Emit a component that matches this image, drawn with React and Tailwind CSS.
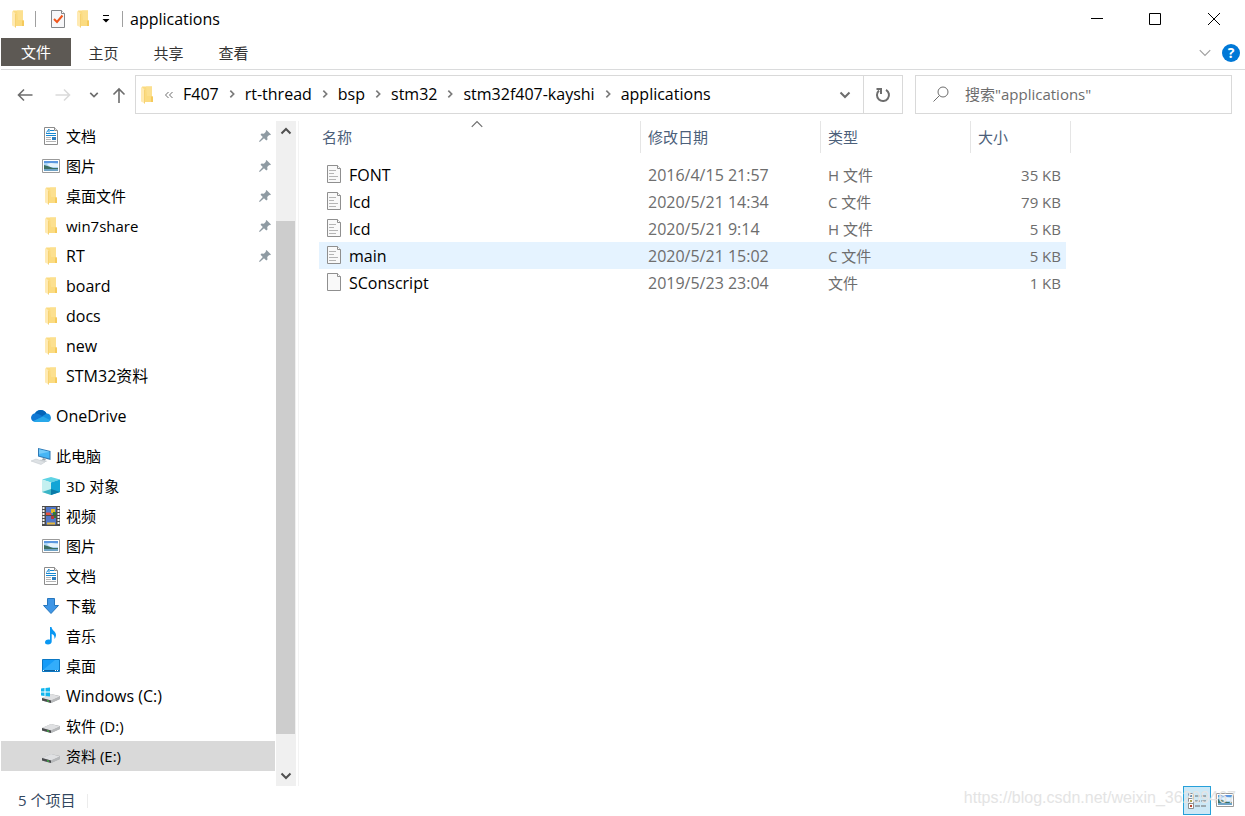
import React from 'react';

const FolderIcon = () => (
    <svg className="block h-4.5 w-3.5 shrink-0" viewBox="0 0 14 18">
        <path d="M2 .5h10V10l1 1v5H4z" fill="#fbdb80" />
        <path d="M6 .5h6V10H7z" fill="#fce08f" />
        <path d="M11 11l1-1 1 1v5h-2z" fill="#f5ca5c" />
        <path d="M1 1l4 2.500v14L1 15.500z" fill="#ffeab2" />
        <path d="M4.500 3.500v14" stroke="#f6d273" strokeWidth="1" />
    </svg>
);

const DocumentIcon = () => (
    <svg className="block h-4.5 w-4.5 shrink-0" viewBox="0 0 18 18">
        <path d="M2.500 .5h10l3 3v14h-13z" fill="#fff" stroke="#8c8c8c" />
        <path d="M12.500 .5v3h3" fill="#e8e8e8" stroke="#8c8c8c" />
        <path d="M4.500 5.500l2.500-3.500v3.500M8 3.500h4M4 6.500h10M4 8.500h10" stroke="#1787d0" fill="none" />
        <path d="M4 10.500h5M4 12.500h5M4 14.500h10" stroke="#b4b4b4" />
        <path d="M10 10h4v3h-4z" fill="#2f7fc0" />
    </svg>
);

const PictureIcon = () => (
    <svg className="block h-4.5 w-4.5 shrink-0" viewBox="0 0 18 18">
        <path d="M.5 2.500h17v13H.5z" fill="#fff" stroke="#9a9a9a" />
        <path d="M2 4h14v10H2z" fill="#a9d3f5" />
        <path d="M2 4h14v2H2z" fill="#5b97e0" />
        <path d="M5 7l4-1 7 1v3H8z" fill="#e6f3fc" />
        <path d="M2 8l5 1.500 4 1.500h5v1H2z" fill="#3d6f62" />
        <path d="M2 12h14v2H2z" fill="#6fa3c6" />
    </svg>
);

const OneDriveIcon = () => (
    <svg className="block h-3.5 w-5 shrink-0" viewBox="0 0 20 14">
        <path d="M4.500 13a4.300 4.300 0 0 1-.6-8.400A6.500 6.500 0 0 1 15.500 4.500 4.300 4.300 0 0 1 16.500 13z" fill="#1490df" />
        <path d="M3.900 4.600A6.500 6.500 0 0 1 15.500 4.500L10 8z" fill="#0364b8" />
        <path d="M3.900 4.600C6 4 8 5 12 7.500L2 12.300A4.200 4.200 0 0 1 3.900 4.600z" fill="#0f78d4" />
        <path d="M2 12.300L12 7.500l7.500 3.800A4 4 0 0 1 16.500 13h-12z" fill="#28a8ea" />
    </svg>
);

const ComputerIcon = () => (
    <svg className="block h-4.5 w-5 shrink-0" viewBox="0 0 20 18">
        <path d="M7 1l12.500 3v9L7 9.500z" fill="#3079b5" />
        <path d="M8 2.200l10.500 2.600v6.700L8 8.700z" fill="#46b5f5" />
        <path d="M8 2.200l10.500 2.600L8 7z" fill="#75cbfa" />
        <path d="M12 11l3 .8-1 2-3-.8z" fill="#9ba4ab" />
        <path d="M9.500 12.500l7 1.500-2 1-6-1.500z" fill="#c9ced2" />
        <path d="M0 14l5-2 9 3-4 2.500z" fill="#dde1e4" stroke="#bfc5ca" strokeWidth=".5" />
    </svg>
);

const CubeIcon = () => (
    <svg className="block h-4.5 w-4.5 shrink-0" viewBox="0 0 18 18">
        <path d="M9 0l9 2.500L9 5.500 0 2.500z" fill="#5fd3e4" />
        <path d="M0 2.500l9 3V18l-9-3z" fill="#c4f0f0" />
        <path d="M18 2.500l-9 3V18l9-3z" fill="#12a5d6" />
        <path d="M9 12l9 3-9 3z" fill="#0b7ba8" />
        <path d="M9 12l-9 3 9 3z" fill="#3cb5c6" />
    </svg>
);

const VideoIcon = () => (
    <svg className="block h-5 w-4.5 shrink-0" viewBox="0 0 18 20">
        <path d="M0 0h18v20H0z" fill="#4b4b4b" />
        <path d="M1.500 1v18M16.500 1v18" stroke="#f5f5f5" strokeWidth="2" strokeDasharray="2 1" />
        <path d="M4 1h10v8H4zM4 10h10v8.500H4z" fill="#5278c9" />
        <path d="M4 6.500h4l2 2.500H4z" fill="#e8503a" />
        <path d="M9 3h4v4H9z" fill="#e6b826" />
        <path d="M11 6h3v3h-3zM11 10h3v2h-3z" fill="#347a35" />
        <path d="M9 10h3v3H9z" fill="#b8373a" />
        <path d="M5 16.500h8v2H5z" fill="#e7b93e" />
    </svg>
);

const DownloadIcon = () => (
    <svg className="block h-4.5 w-4.5 shrink-0" viewBox="0 0 18 18">
        <path d="M5.500 1.500h7v7h4L9 16.500 1.500 8.500h4z" fill="#3f96e6" stroke="#2676bd" />
    </svg>
);

const MusicIcon = () => (
    <svg className="block h-4.5 w-4.5 shrink-0" viewBox="0 0 18 18">
        <path d="M8 0h1.500c.5 3.500 4.500 4.500 4.500 8 0 1.500-.8 3-1.500 4 .2-3-.8-4.500-2.800-5V14.500c0 1.800-1.700 3-3.700 3S3 16.500 3 15.200c0-1.500 1.500-2.700 3.300-2.700.7 0 1.300.1 1.700.3z" fill="#0a97f2" />
    </svg>
);

const DesktopIcon = () => (
    <svg className="block h-4.5 w-4.5 shrink-0" viewBox="0 0 18 18">
        <path d="M.5 2.500h17v12H.5z" fill="#169cf8" stroke="#0b78c4" />
        <path d="M1 13L13 3h4v10z" fill="#33adfb" />
        <path d="M1 13.500h16" stroke="#0d609d" />
        <path d="M1 13.500h1M13 13.500h1M15 13.500h1" stroke="#fff" />
    </svg>
);

const DriveIcon = ({ system }) => (
    <svg className="block h-4.5 w-5 shrink-0" viewBox="0 0 20 18">
        <path d="M1 11l9-4 9 2v3l-9 4-9-2.500z" fill="#a9abad" />
        <path d="M1 11l9-4 9 2.500-9 4z" fill="#dfe0e2" />
        <path d="M1 11l9 2.500V16l-9-2.500z" fill="#4a4c4e" />
        <path d="M10 13.500l9-4V12l-9 4z" fill="#b7b9bb" />
        <path d="M6 13.300l2 .5v1l-2-.5z" fill="#38d13f" />
        {system && <path d="M0 1.500l3.500-.5v3.500H0zM4.500 1L9 .5v4H4.500zM0 5.500h3.500V9L0 8.500zM4.500 5.500H9v4L4.500 9z" fill="#12b6ee" />}
    </svg>
);

const FileIcon = ({ lines }) => (
    <svg className="block h-4.5 w-3.5 shrink-0" viewBox="0 0 14 18">
        <path d="M.5 .5h10l3 3v14H.5z" fill="#f9f9f9" stroke="#8f8f8f" />
        <path d="M10.500 .5v3h3" fill="#fff" stroke="#8f8f8f" />
        {lines && <path d="M2 5.500h7M2 8.500h5M2 11.500h9M2 14.500h7" stroke="#b5b5b5" />}
    </svg>
);

const PinIcon = () => (
    <svg className="block size-3" viewBox="0 0 12 12">
        <path d="M7.500 0L12 4.500l-1 .8-.8-.2-2 2 .3 2.400-1.200 1L5 8.200 .8 12 0 11.200 3.800 7 1.500 4.700l1-1.200 2.400.3 2-2L6.700 1z" fill="#8f9ba3" />
    </svg>
);

const Chevron = ({ className, d, width = 2 }) => (
    <svg className={className} viewBox="0 0 12 12" fill="none" stroke="currentColor" strokeWidth={width}>
        <path d={d} />
    </svg>
);

const DOWN = 'M1.500 3.500L6 8l4.500-4.500';
const UP = 'M1.500 8.500L6 4l4.500 4.500';
const RIGHT = 'M4 2l4 4-4 4';

const quickAccess = [
    { name: '文档', icon: DocumentIcon, pinned: true },
    { name: '图片', icon: PictureIcon, pinned: true },
    { name: '桌面文件', icon: FolderIcon, pinned: true },
    { name: 'win7share', icon: FolderIcon, pinned: true },
    { name: 'RT', icon: FolderIcon, pinned: true, latin: true },
    { name: 'board', icon: FolderIcon, latin: true },
    { name: 'docs', icon: FolderIcon, latin: true },
    { name: 'new', icon: FolderIcon, latin: true },
    { name: 'STM32资料', icon: FolderIcon, latin: true },
];

const computer = [
    { name: '3D 对象', icon: CubeIcon },
    { name: '视频', icon: VideoIcon },
    { name: '图片', icon: PictureIcon },
    { name: '文档', icon: DocumentIcon },
    { name: '下载', icon: DownloadIcon },
    { name: '音乐', icon: MusicIcon },
    { name: '桌面', icon: DesktopIcon },
    { name: 'Windows (C:)', icon: DriveIcon, system: true, latin: true },
    { name: '软件 (D:)', icon: DriveIcon },
    { name: '资料 (E:)', icon: DriveIcon, selected: true },
];

const files = [
    { name: 'FONT', date: '2016/4/15 21:57', type: 'H 文件', size: '35 KB', lines: true },
    { name: 'lcd', date: '2020/5/21 14:34', type: 'C 文件', size: '79 KB', lines: true },
    { name: 'lcd', date: '2020/5/21 9:14', type: 'H 文件', size: '5 KB', lines: true },
    { name: 'main', date: '2020/5/21 15:02', type: 'C 文件', size: '5 KB', lines: true, active: true },
    { name: 'SConscript', date: '2019/5/23 23:04', type: '文件', size: '1 KB' },
];

const crumbs = ['F407', 'rt-thread', 'bsp', 'stm32', 'stm32f407-kayshi', 'applications'];

const TreeItem = ({ name, icon: Icon, pinned, system, selected, latin }) => (
    <li>
        <a href="#" className={`flex h-7.5 items-center pl-10 pr-1 ${selected ? 'bg-[#d9d9d9]' : ''}`}>
            <span className="flex w-5 justify-center"><Icon system={system} /></span>
            <span className={`ml-1.25 flex-1 ${latin ? 'text-[16px]' : ''}`}>{name}</span>
            {pinned && <PinIcon />}
        </a>
    </li>
);

const TitleBar = () => (
    <header className="flex h-9.5 items-center pl-2.5">
        <FolderIcon />
        <span className="ml-2.5 h-4 w-px bg-[#a0a0a0]" />
        <button aria-label="属性" className="ml-3.5">
            <svg className="block h-4.5 w-4" viewBox="0 0 16 18">
                <path d="M1.500 .5h10l3 3v14h-13z" fill="#f7f7f9" stroke="#85878a" />
                <path d="M11.500 .5v3h3" fill="#fff" stroke="#85878a" />
                <path d="M4 9l3 3 5.500-6.500" fill="none" stroke="#f0561d" strokeWidth="2" />
            </svg>
        </button>
        <button aria-label="新建文件夹" className="ml-2.5"><FolderIcon /></button>
        <button aria-label="自定义快速访问工具栏" className="ml-3">
            <svg className="block h-2 w-2" viewBox="0 0 8 8">
                <path d="M1 0h6v1H1zM.5 4h7L4 7.500z" fill="#000" />
            </svg>
        </button>
        <span className="ml-3 mr-1.75 h-4 w-px bg-[#a0a0a0]" />
        <h1 className="flex-1 text-[16px] leading-5">applications</h1>
        <button aria-label="最小化" className="flex w-14.5 justify-center">
            <svg className="block size-3" viewBox="0 0 12 12"><path d="M0 5.500h12" stroke="#000" /></svg>
        </button>
        <button aria-label="最大化" className="flex w-14.5 justify-center">
            <svg className="block size-3" viewBox="0 0 12 12"><path d="M.5 .5h11v11H.5z" fill="none" stroke="#000" /></svg>
        </button>
        <button aria-label="关闭" className="flex w-15 justify-center">
            <svg className="block size-3" viewBox="0 0 12 12"><path d="M0 0l12 12M12 0L0 12" stroke="#000" /></svg>
        </button>
    </header>
);

const Ribbon = () => (
    <nav className="-mr-px flex h-8 items-start border-b border-[#dadbdc] pr-px text-[#333]">
        <button className="h-7 w-17.5 bg-[#5d5954] text-white">文件</button>
        <button className="h-7.5 w-16.25">主页</button>
        <button className="h-7.5 w-16.25">共享</button>
        <button className="h-7.5 w-16.25">查看</button>
        <span className="flex-1" />
        <button aria-label="展开功能区" className="mt-2 text-[#a0a0a0]">
            <Chevron className="block size-3.5" d={DOWN} width={1} />
        </button>
        <button aria-label="帮助" className="mx-1 mt-1.5 ml-2.5 size-4.5 rounded-full bg-[#0078d7] text-sm leading-4 font-bold text-white">?</button>
    </nav>
);

const AddressBar = () => (
    <div className="flex items-center pt-1.25 pr-3 text-[#6d6d6d]">
        <button aria-label="后退" className="ml-4">
            <svg className="block size-4" viewBox="0 0 16 16" fill="none" stroke="currentColor" strokeWidth="1.6"><path d="M15.500 8H1.500M7 2.500L1.500 8 7 13.500" /></svg>
        </button>
        <button aria-label="前进" className="ml-5.5 text-[#dadada]">
            <svg className="block size-4" viewBox="0 0 16 16" fill="none" stroke="currentColor" strokeWidth="1.6"><path d="M.5 8h14M9 2.500L14.500 8 9 13.500" /></svg>
        </button>
        <button aria-label="最近的位置" className="ml-4.5">
            <Chevron className="block size-2.5" d={DOWN} />
        </button>
        <button aria-label="向上" className="ml-3">
            <svg className="block size-4" viewBox="0 0 16 16" fill="none" stroke="currentColor" strokeWidth="1.6"><path d="M8 16V2M2.500 7.500L8 2l5.500 5.500" /></svg>
        </button>
        <div className="ml-2 flex h-9.75 flex-1 items-center border border-[#d9d9d9]">
            <span className="ml-1 mr-2.5"><FolderIcon /></span>
            <svg className="block size-2.5" viewBox="0 0 10 10" fill="none" stroke="currentColor"><path d="M4.500 2l-3 3 3 3M8.500 2l-3 3 3 3" /></svg>
            <ol className="ml-2.25 flex flex-1 items-center pb-0.5 text-[16px] leading-5 text-black">
                {crumbs.map((crumb, i) => (
                    <li key={crumb} className="flex items-center">
                        {i > 0 && <Chevron className="mx-2 size-2.5 text-[#7a7a7a]" d={RIGHT} />}
                        <a href="#">{crumb}</a>
                    </li>
                ))}
            </ol>
            <button aria-label="以前的位置" className="mr-3"><Chevron className="block size-3" d={DOWN} /></button>
            <button aria-label="刷新" className="flex h-full w-9.75 items-center justify-center border-l border-[#d9d9d9]">
                <svg className="block size-4" viewBox="0 0 16 16" fill="none" stroke="currentColor" strokeWidth="2">
                    <path d="M11 2.800A6 6 0 1 1 4 3.500M1.500 2h4.500v5" />
                </svg>
            </button>
        </div>
        <label className="ml-3 flex h-9.75 w-79.25 items-center border border-[#d9d9d9] pb-0.5 pl-4.25">
            <svg className="block size-4 shrink-0" viewBox="0 0 16 16" fill="none" stroke="currentColor"><circle cx="10" cy="6" r="5" /><path d="M6.500 9.500L.5 15.500" /></svg>
            <input type="text" aria-label="搜索" placeholder={'搜索"applications"'} className="ml-4 min-w-0 flex-1 outline-none placeholder:text-[#6d6d6d]" />
        </label>
    </div>
);

const Sidebar = () => (
    <aside className="flex w-74.5 shrink-0 border-r border-[#f3f3f3]">
        <div className="min-w-0 flex-1">
            <ul>
                {quickAccess.map((item) => <TreeItem key={item.name} {...item} />)}
            </ul>
            <a href="#" className="my-2.5 flex h-7.5 items-center gap-1.25 pl-7.5 text-[16px]"><OneDriveIcon />OneDrive</a>
            <a href="#" className="flex h-7.5 items-center gap-1.25 pl-7.5"><ComputerIcon />此电脑</a>
            <ul>
                {computer.map((item) => <TreeItem key={item.name} {...item} />)}
            </ul>
        </div>
        <div className="mr-0.5 ml-px flex w-5 flex-col items-center bg-[#f0f0f0] pr-px text-[#505050]">
            <button aria-label="向上滚动" className="flex h-5 w-full items-center justify-center"><Chevron className="size-3" d={UP} /></button>
            <div className="mt-20 w-full flex-1"><div className="h-full bg-[#cdcdcd]" /></div>
            <button aria-label="向下滚动" className="mt-8 flex h-5 w-full items-center justify-center"><Chevron className="size-3" d={DOWN} /></button>
        </div>
    </aside>
);

const headClasses = "h-8 w-full border-r border-[#e5e5e5] text-left text-[#4c607a]";

const FileTable = () => (
    <main className="flex-1 pl-5">
        <table className="table-fixed border-collapse text-[#6d6d6d]">
            <colgroup>
                <col className="w-80.5" />
                <col className="w-45" />
                <col className="w-37.5" />
                <col className="w-23.75" />
                <col className="w-1.25" />
            </colgroup>
            <thead>
                <tr>
                    <th className="p-0 pb-2 font-normal">
                        <button className={`relative pl-0.75 ${headClasses}`}>
                            名称
                            <Chevron className="absolute -top-1 left-1/2 size-3.5 -translate-x-2.5 text-[#6d6d6d]" d={UP} width={1} />
                        </button>
                    </th>
                    <th className="p-0 pb-2 font-normal"><button className={`pl-1.75 ${headClasses}`}>修改日期</button></th>
                    <th className="p-0 pb-2 font-normal"><button className={`pl-1.75 ${headClasses}`}>类型</button></th>
                    <th colSpan={2} className="p-0 pb-2 font-normal"><button className={`pl-1.75 ${headClasses}`}>大小</button></th>
                </tr>
            </thead>
            <tbody>
                {files.map((file) => (
                    <tr key={file.name + file.type} className={`h-6.75 ${file.active ? '*:bg-[#e5f3ff]' : ''}`}>
                        <td className="p-0 pl-2 text-[16px] leading-5 text-black">
                            <span className="flex items-start gap-2"><FileIcon lines={file.lines} />{file.name}</span>
                        </td>
                        <td className="p-0 pl-1.75 text-[16px] leading-5">{file.date}</td>
                        <td className="p-0 pl-1.75">{file.type}</td>
                        <td className="p-0 pr-1.25 text-right">{file.size}</td>
                    </tr>
                ))}
            </tbody>
        </table>
    </main>
);

const StatusBar = () => (
    <footer className="relative flex h-7.5 items-start pl-4.25 text-[#33475f]">
        <span className="mt-1">5 个项目</span>
        <span className="mt-2 ml-3 h-3.5 w-px bg-[#ececec]" />
        <span className="flex-1" />
        <button aria-label="详细信息" className="flex h-7.25 w-7 items-center justify-center border border-[#26a0da] bg-[#cce8f6]">
            <svg className="block h-4 w-4.5" viewBox="0 0 18 16">
                <path d="M.5 .5h5v15h-5zM.5 5.500h5M.5 10.500h5" fill="#fff" stroke="#8f8f8f" />
                <path d="M2 2h2v2H2z" fill="#5c8fae" />
                <path d="M2 7h2v2H2z" fill="#a7a04e" />
                <path d="M2 12h2v2H2z" fill="#b8452c" />
                <path d="M7 3h5M13 3h5M7 8h5M13 8h5M7 13h5M13 13h5" stroke="#6b6b6b" />
            </svg>
        </button>
        <button aria-label="大缩略图" className="mt-1.25 mr-2.5 ml-1.25"><PictureIcon /></button>
        <span className="pointer-events-none absolute right-2 bottom-1.5 font-['Liberation_Sans',sans-serif] text-base text-[#e4e4e4]">
            https://blog.csdn.net/weixin_36209467
        </span>
    </footer>
);

const App = () => (
    <div className="flex min-h-screen flex-col bg-white px-px font-['Open_Sans','Noto_Sans_CJK_SC',sans-serif] text-[15px] leading-5 text-black">
        <TitleBar />
        <Ribbon />
        <AddressBar />
        <div className="mt-1.75 flex flex-1">
            <Sidebar />
            <FileTable />
        </div>
        <StatusBar />
    </div>
);

export default App;
